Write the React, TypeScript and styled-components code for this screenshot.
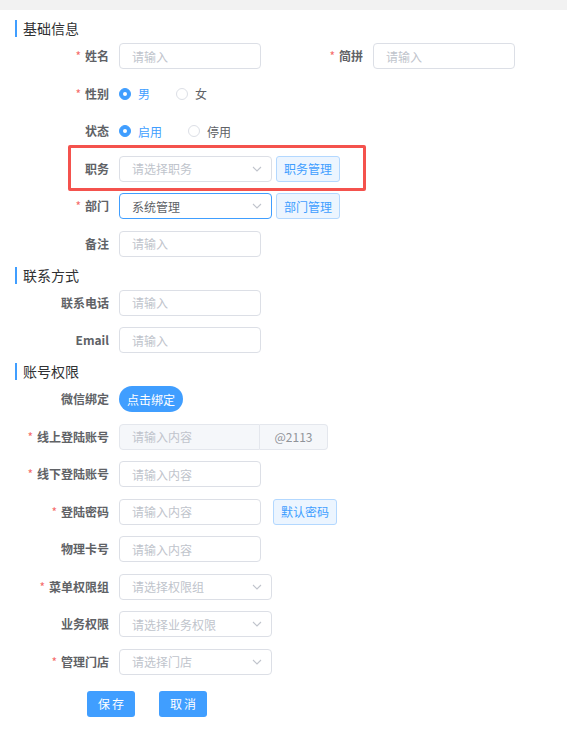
import React, { FC } from 'react';
import styled, { createGlobalStyle } from 'styled-components';

const GlobalStyle = createGlobalStyle`
  body {
    margin: 0;
    background: #fff;
    font-family: "Noto Sans CJK SC", "Noto Sans", sans-serif;
    color: #606266;
  }
  * {
    box-sizing: border-box;
  }
`;

type FieldProps = {
  label: string;
  required?: boolean;
  children?: React.ReactNode;
};

const Field: FC<FieldProps> = ({ label, required, children }) => (
  <Item>
    <Label>
      {required && <Star>*</Star>}
      {label}
    </Label>
    {children}
  </Item>
);

const Arrow: FC = () => (
  <ArrowIcon width="10" height="6" viewBox="0 0 10 6">
    <path d="M1 1 L5 5 L9 1" fill="none" stroke="#c0c4cc" strokeWidth="1.1" />
  </ArrowIcon>
);

type SelectProps = { value?: string; placeholder: string; $focus?: boolean };

const Select: FC<SelectProps> = ({ value, placeholder, $focus }) => (
  <SelectBox $focus={$focus}>
    {value ? <Value>{value}</Value> : <Placeholder>{placeholder}</Placeholder>}
    <Arrow />
  </SelectBox>
);

type RadioProps = { options: string[]; checked: number };

const Radios: FC<RadioProps> = ({ options, checked }) => (
  <RadioGroup>
    {options.map((o, i) => (
      <RadioItem key={o} $on={i === checked}>
        <Circle $on={i === checked} />
        {o}
      </RadioItem>
    ))}
  </RadioGroup>
);

const App: FC = () => {
  return (
    <>
      <GlobalStyle />
      <TopBar />
      <Form>
        <Section>
          <Title>基础信息</Title>
          <Rows>
            <Row>
              <Field label="姓名" required>
                <Input placeholder="请输入" />
              </Field>
              <Field label="简拼" required>
                <Input placeholder="请输入" />
              </Field>
            </Row>
            <Field label="性别" required>
              <Radios options={['男', '女']} checked={0} />
            </Field>
            <Field label="状态">
              <Radios options={['启用', '停用']} checked={0} />
            </Field>
            <Marked>
              <Field label="职务">
                <Select placeholder="请选择职务" />
                <LightButton>职务管理</LightButton>
              </Field>
              <Highlight />
            </Marked>
            <Field label="部门" required>
              <Select value="系统管理" placeholder="" $focus />
              <LightButton>部门管理</LightButton>
            </Field>
            <Field label="备注">
              <Input placeholder="请输入" />
            </Field>
          </Rows>
        </Section>

        <Section>
          <Title>联系方式</Title>
          <Rows>
            <Field label="联系电话">
              <Input placeholder="请输入" />
            </Field>
            <Field label="Email">
              <Input placeholder="请输入" />
            </Field>
          </Rows>
        </Section>

        <Section>
          <Title>账号权限</Title>
          <Rows>
            <Field label="微信绑定">
              <RoundButton>点击绑定</RoundButton>
            </Field>
            <Field label="线上登陆账号" required>
              <Group>
                <GroupInput placeholder="请输入内容" disabled />
                <Append>@2113</Append>
              </Group>
            </Field>
            <Field label="线下登陆账号" required>
              <Input placeholder="请输入内容" />
            </Field>
            <Field label="登陆密码" required>
              <Input placeholder="请输入内容" />
              <LightButton $gap={12}>默认密码</LightButton>
            </Field>
            <Field label="物理卡号">
              <Input placeholder="请输入内容" />
            </Field>
            <Field label="菜单权限组" required>
              <Select placeholder="请选择权限组" />
            </Field>
            <Field label="业务权限">
              <Select placeholder="请选择业务权限" />
            </Field>
            <Field label="管理门店" required>
              <Select placeholder="请选择门店" />
            </Field>
          </Rows>
        </Section>

        <Actions>
          <PrimaryButton>保存</PrimaryButton>
          <PrimaryButton>取消</PrimaryButton>
        </Actions>
      </Form>
    </>
  );
};

const TopBar = styled.div`
  height: 10px;
  background: #f2f2f2;
`;

const Form = styled.div`
  padding: 10px 15px 30px;
  display: flex;
  flex-direction: column;
  gap: 10px;
`;

const Section = styled.section`
  display: flex;
  flex-direction: column;
`;

const Title = styled.h3`
  margin: 0 0 6px;
  height: 17px;
  line-height: 17px;
  border-left: 2px solid #409eff;
  padding-left: 6px;
  font-size: 14px;
  font-weight: 400;
  color: #303133;
`;

const Rows = styled.div`
  display: flex;
  flex-direction: column;
  gap: 11.5px;
`;

const Row = styled.div`
  display: flex;
  gap: 8px;
`;

const Item = styled.div`
  display: flex;
  align-items: center;
  height: 26px;
`;

const Label = styled.label`
  width: 104px;
  padding-right: 10px;
  text-align: right;
  font-size: 12px;
  font-weight: 700;
  color: #606266;
  line-height: 26px;
  white-space: nowrap;
`;

const Star = styled.span`
  color: #f56c6c;
  margin-right: 4px;
  font-weight: 400;
`;

const Input = styled.input`
  width: 142px;
  height: 26px;
  border: 1px solid #dcdfe6;
  border-radius: 4px;
  padding: 0 12px;
  font-family: inherit;
  font-size: 12px;
  color: #606266;
  background: #fff;
  outline: none;

  &::placeholder {
    color: #c0c4cc;
  }
`;

const Group = styled.div`
  display: flex;
  width: 209px;
  height: 26px;
`;

const GroupInput = styled(Input)`
  width: 141px;
  border-color: #e4e7ed;
  border-radius: 4px 0 0 4px;
  background: #f5f7fa;
`;

const Append = styled.div`
  flex: 1;
  display: flex;
  align-items: center;
  justify-content: center;
  background: #f5f7fa;
  border: 1px solid #e4e7ed;
  border-left: none;
  border-radius: 0 4px 4px 0;
  font-size: 12px;
  color: #909399;
`;

const SelectBox = styled.div<{ $focus?: boolean }>`
  position: relative;
  width: 153px;
  height: 26px;
  border: 1px solid ${({ $focus }) => ($focus ? '#409eff' : '#dcdfe6')};
  border-radius: 4px;
  padding: 0 12px;
  display: flex;
  align-items: center;
  font-size: 12px;
`;

const Placeholder = styled.span`
  color: #c0c4cc;
`;

const Value = styled.span`
  color: #606266;
`;

const ArrowIcon = styled.svg`
  position: absolute;
  right: 9px;
  top: 9px;
`;

const LightButton = styled.button<{ $gap?: number }>`
  margin-left: ${({ $gap }) => $gap ?? 4}px;
  width: 64px;
  height: 26px;
  padding: 0;
  border: 1px solid #b3d8ff;
  border-radius: 3px;
  background: #ecf5ff;
  color: #409eff;
  font-family: inherit;
  font-size: 12px;
`;

const RoundButton = styled.button`
  width: 64px;
  height: 26px;
  padding: 0;
  border: none;
  border-radius: 13px;
  background: #409eff;
  color: #fff;
  font-family: inherit;
  font-size: 12px;
`;

const RadioGroup = styled.div`
  display: flex;
  align-items: center;
  gap: 26px;
`;

const RadioItem = styled.span<{ $on: boolean }>`
  display: flex;
  align-items: center;
  gap: 7px;
  font-size: 12px;
  color: ${({ $on }) => ($on ? '#409eff' : '#606266')};
`;

const Circle = styled.span<{ $on: boolean }>`
  width: 12px;
  height: 12px;
  border-radius: 50%;
  border: 1px solid ${({ $on }) => ($on ? '#409eff' : '#dcdfe6')};
  background: ${({ $on }) => ($on ? '#409eff' : '#fff')};
  display: flex;
  align-items: center;
  justify-content: center;

  &::after {
    content: '';
    width: 4px;
    height: 4px;
    border-radius: 50%;
    background: #fff;
  }
`;

const Marked = styled.div`
  position: relative;
`;

const Highlight = styled.div`
  position: absolute;
  left: 53px;
  top: -11px;
  width: 298px;
  height: 46px;
  border: 3px solid #f4524d;
  border-radius: 2px;
  pointer-events: none;
`;

const Actions = styled.div`
  display: flex;
  gap: 24px;
  margin: 6px 0 0 72px;
`;

const PrimaryButton = styled.button`
  width: 48px;
  height: 26px;
  padding: 0 0 0 2px;
  border: none;
  border-radius: 3px;
  background: #409eff;
  color: #fff;
  font-family: inherit;
  font-size: 12px;
  letter-spacing: 2px;
`;

export default App;
